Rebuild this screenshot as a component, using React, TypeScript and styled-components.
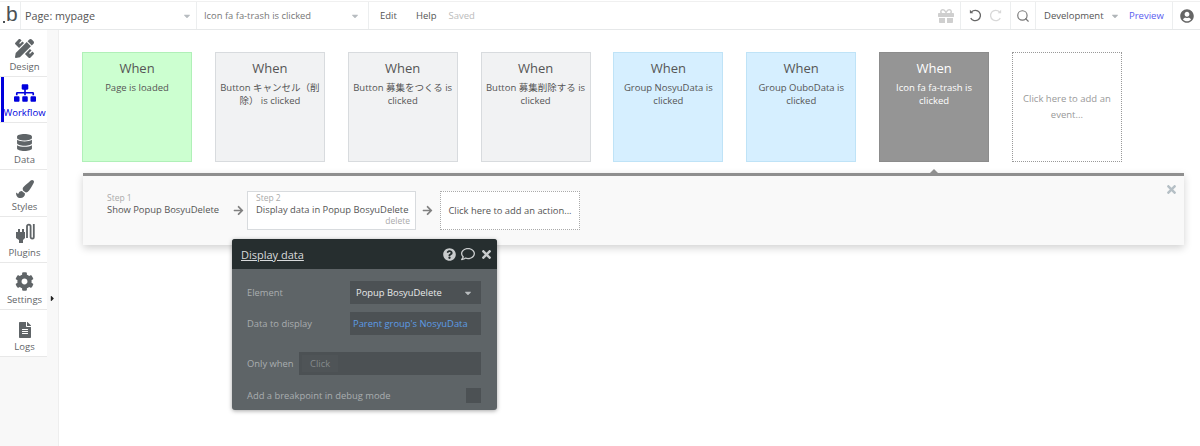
import React from "react"
import styled, { createGlobalStyle } from "styled-components"
import { Search } from "lucide-react"
import {
  FaArrowRight,
  FaCaretDown,
  FaCaretRight,
  FaCog,
  FaDatabase,
  FaFileAlt,
  FaGift,
  FaPaintBrush,
  FaPencilRuler,
  FaQuestionCircle,
  FaRegComment,
  FaSitemap,
  FaTimes,
  FaUserCircle,
} from "react-icons/fa"

const GlobalStyle = createGlobalStyle`
  html, body {
    margin: 0;
    padding: 0;
    background: #fff;
    font-family: "Open Sans", "Noto Sans CJK JP", sans-serif;
  }
`

const events = [
  { kind: "green", text: "Page is loaded" },
  { kind: "plain", text: "Button キャンセル（削除） is clicked" },
  { kind: "plain", text: "Button 募集をつくる is clicked" },
  { kind: "plain", text: "Button 募集削除する is clicked" },
  { kind: "blue", text: "Group NosyuData is clicked" },
  { kind: "blue", text: "Group OuboData is clicked" },
  { kind: "active", text: "Icon fa fa-trash is clicked" },
]

const PlugIcon = () => (
  <svg width="20" height="21" viewBox="0 0 20 21" fill="none">
    <path d="M1 9h2V6h2v3h2V6h2v3h1v6l-2 2v3H4v-3l-3-2z" fill="#5f6467" />
    <path d="M12 15V3.5a1.8 1.8 0 0 1 3.6 0V14a1.6 1.6 0 0 0 3.2 0V1" stroke="#5f6467" strokeWidth="1.8" />
  </svg>
)

const ReloadIcon = ({ color, flip }: { color: string; flip?: boolean }) => (
  <svg width="13" height="13" viewBox="0 0 15 15" fill="none" style={flip ? { transform: "scaleX(-1)" } : undefined}>
    <path d="M3 3.2A6 6 0 1 1 2 10.5" stroke={color} strokeWidth="1.5" />
    <path d="M1 1v4h4z" fill={color} />
  </svg>
)

const navItems = [
  { label: "Design", icon: <FaPencilRuler size={19} /> },
  { label: "Workflow", icon: <FaSitemap size={22} />, active: true },
  { label: "Data", icon: <FaDatabase size={17} /> },
  { label: "Styles", icon: <FaPaintBrush size={18} /> },
  { label: "Plugins", icon: <PlugIcon /> },
  { label: "Settings", icon: <FaCog size={19} /> },
  { label: "Logs", icon: <FaFileAlt size={16} /> },
]

const App = () => {
  return (
    <>
      <GlobalStyle />
      <Page>
        <TopBar>
          <Logo>
            <LogoDot />b
          </Logo>
          <PageSelect>
            Page: mypage
            <SmallCaret />
          </PageSelect>
          <EventSelect>
            Icon fa fa-trash is clicked
            <SmallCaret />
          </EventSelect>
          <MenuLink>Edit</MenuLink>
          <MenuLink>Help</MenuLink>
          <Saved>Saved</Saved>
          <Spacer />
          <IconCell $w={28}>
            <FaGift size={16} color="#cfcfcf" />
          </IconCell>
          <IconCell $w={50} $left>
            <ReloadIcon color="#666" />
            <ReloadIcon color="#d8d8d8" flip />
          </IconCell>
          <IconCell $w={25} $left>
            <Search size={14} color="#777" strokeWidth={2} />
          </IconCell>
          <DevSelect>
            Development
            <FaCaretDown size={10} color="#b0b5b8" />
          </DevSelect>
          <Preview>Preview</Preview>
          <IconCell $w={28} $left>
            <FaUserCircle size={14} color="#666" />
          </IconCell>
        </TopBar>
        <Main>
          <Sidebar>
            {navItems.map((item) => (
              <NavItem key={item.label} $active={item.active}>
                {item.icon}
                <NavLabel>{item.label}</NavLabel>
              </NavItem>
            ))}
            <ExpandCaret>
              <FaCaretRight size={9} />
            </ExpandCaret>
          </Sidebar>
          <Canvas>
            <EventRow>
              {events.map((ev) => (
                <EventCard key={ev.text} $kind={ev.kind}>
                  <When>When</When>
                  <EventText>{ev.text}</EventText>
                </EventCard>
              ))}
              <AddEvent>Click here to add an event...</AddEvent>
            </EventRow>
            <StepPanel>
              <Notch />
              <Step>
                <StepNo>Step 1</StepNo>
                <StepName>Show Popup BosyuDelete</StepName>
              </Step>
              <StepArrow />
              <ActiveStep>
                <StepNo>Step 2</StepNo>
                <StepName>Display data in Popup BosyuDelete</StepName>
                <DeleteText>delete</DeleteText>
              </ActiveStep>
              <StepArrow />
              <AddAction>Click here to add an action...</AddAction>
              <PanelClose>
                <FaTimes size={13} />
              </PanelClose>
            </StepPanel>
            <Popup>
              <PopupHead>
                <PopupTitle>Display data</PopupTitle>
                <PopupIcons>
                  <FaQuestionCircle size={13} color="#c9cccd" />
                  <FaRegComment size={14} color="#c9cccd" />
                  <FaTimes size={13} color="#c9cccd" />
                </PopupIcons>
              </PopupHead>
              <PopupBody>
                <FieldRow>
                  <FieldLabel>Element</FieldLabel>
                  <SelectBox>
                    Popup BosyuDelete
                    <FaCaretDown size={10} color="#b9bdbf" />
                  </SelectBox>
                </FieldRow>
                <FieldRow>
                  <FieldLabel>Data to display</FieldLabel>
                  <ExpressionBox>Parent group's NosyuData</ExpressionBox>
                </FieldRow>
                <WhenRow>
                  <WhenLabel>Only when</WhenLabel>
                  <WhenBox>
                    <ClickChip>Click</ClickChip>
                  </WhenBox>
                </WhenRow>
                <DebugRow>
                  <FieldLabel>Add a breakpoint in debug mode</FieldLabel>
                  <Checkbox />
                </DebugRow>
              </PopupBody>
            </Popup>
          </Canvas>
        </Main>
      </Page>
    </>
  )
}

export default App

const Page = styled.div`
  width: 1200px;
  height: 446px;
  overflow: hidden;
  display: flex;
  flex-direction: column;
  background: #fff;
  color: #444;
`

const TopBar = styled.div`
  height: 27px;
  margin-top: 1px;
  display: flex;
  align-items: center;
  border-top: 1px solid #f0f0f0;
  border-bottom: 1px solid #e6e8e9;
  font-size: 9.5px;
  flex-shrink: 0;
  box-sizing: content-box;
`

const Logo = styled.div`
  position: relative;
  width: 21px;
  height: 100%;
  box-sizing: border-box;
  padding-left: 6px;
  font-size: 21px;
  line-height: 24px;
  color: #4a5054;
  border-right: 1px solid #eceeef;
  font-family: "Liberation Sans", sans-serif;
`

const LogoDot = styled.span`
  position: absolute;
  left: 3px;
  top: 19px;
  width: 2px;
  height: 2px;
  background: #4a5054;
`

const PageSelect = styled.div`
  width: 176px;
  height: 100%;
  box-sizing: border-box;
  padding: 0 4px 0 4px;
  display: flex;
  align-items: center;
  justify-content: space-between;
  border-right: 1px solid #eceeef;
  font-size: 10.8px;
  color: #555;
`

const EventSelect = styled(PageSelect)`
  width: 172px;
  padding: 0 8px 0 7px;
  font-size: 9.4px;
  color: #777;
`

const SmallCaret = styled(FaCaretDown).attrs({ size: 10, color: "#b7bcc0" })``

const MenuLink = styled.div`
  margin-left: 11px;
  margin-right: 8px;
  color: #555;
`

const Saved = styled.div`
  margin-left: 4px;
  color: #bbb;
`

const Spacer = styled.div`
  flex: 1;
`

const IconCell = styled.div<{ $w: number; $left?: boolean }>`
  width: ${(p) => p.$w}px;
  height: 100%;
  box-sizing: border-box;
  display: flex;
  align-items: center;
  justify-content: space-evenly;
  border-left: ${(p) => (p.$left ? "1px solid #eceeef" : "none")};
`

const DevSelect = styled.div`
  width: 94px;
  height: 100%;
  box-sizing: border-box;
  padding: 0 8px;
  display: flex;
  align-items: center;
  gap: 6px;
  border-left: 1px solid #eceeef;
  color: #555;
`

const Preview = styled.div`
  width: 43px;
  color: #5a5cf0;
`

const Main = styled.div`
  flex: 1;
  display: flex;
  min-height: 0;
`

const Sidebar = styled.div`
  position: relative;
  width: 59px;
  flex-shrink: 0;
  box-sizing: border-box;
  padding-right: 11px;
  background: #f8f8f8;
  border-right: 1px solid #eeeeee;
`

const NavItem = styled.div<{ $active?: boolean }>`
  position: relative;
  height: 46.7px;
  box-sizing: border-box;
  background: #fff;
  display: flex;
  flex-direction: column;
  align-items: center;
  justify-content: flex-end;
  gap: 2px;
  padding: 0 0 3px 2px;
  border-bottom: 1px solid #e8e8e8;
  color: ${(p) => (p.$active ? "#0000dd" : "#5f6467")};

  ${(p) =>
    p.$active &&
    `
    &::before {
      content: "";
      position: absolute;
      left: 1px;
      top: 0;
      bottom: 0;
      width: 3px;
      background: #0000dd;
    }
  `}
`

const NavLabel = styled.div`
  font-size: 9.5px;
  line-height: 13px;
  white-space: nowrap;
`

const ExpandCaret = styled.div`
  position: absolute;
  left: 48px;
  top: 264px;
  color: #222;
  line-height: 0;
`

const Canvas = styled.div`
  position: relative;
  flex: 1;
  padding: 22px 16px 0 23px;
  background: #fff;
`

const EventRow = styled.div`
  display: flex;
  gap: 22.85px;
`

const cardColors: Record<string, string> = {
  green: "background:#ccffd0;border-color:#b0f0b8;color:#555;",
  plain: "background:#f1f2f3;border-color:#d8dbde;color:#555;",
  blue: "background:#d6efff;border-color:#bfe3f7;color:#555;",
  active: "background:#959595;border-color:#8c8c8c;color:#fff;",
}

const EventCard = styled.div<{ $kind: string }>`
  width: 110px;
  height: 110px;
  box-sizing: border-box;
  border: 1px solid;
  padding: 6px 3px 0;
  text-align: center;
  ${(p) => cardColors[p.$kind]}
`

const When = styled.div`
  font-size: 13px;
  line-height: 18px;
`

const EventText = styled.div`
  font-size: 9.5px;
  line-height: 12.5px;
  margin-top: 5px;
`

const AddEvent = styled.div`
  width: 110px;
  height: 110px;
  box-sizing: border-box;
  border: 1px dotted #999;
  padding: 0 10px;
  display: flex;
  align-items: center;
  text-align: center;
  font-size: 9.5px;
  line-height: 16px;
  color: #999;
`

const StepPanel = styled.div`
  position: relative;
  margin-top: 11px;
  margin-left: 1px;
  width: 1101px;
  height: 72px;
  box-sizing: border-box;
  border-top: 3px solid #8f8f8f;
  background: #f9f9f9;
  box-shadow: 0 3px 8px rgba(0, 0, 0, 0.18);
  display: flex;
  align-items: flex-start;
  padding: 15px 0 0 24px;
`

const Notch = styled.div`
  position: absolute;
  left: 846px;
  top: -7px;
  border-left: 5px solid transparent;
  border-right: 5px solid transparent;
  border-bottom: 5px solid #8f8f8f;
`

const Step = styled.div`
  width: 126px;
  padding-top: 2px;
`

const StepNo = styled.div`
  font-size: 8.5px;
  line-height: 10px;
  color: #aaa;
`

const StepName = styled.div`
  font-size: 9.4px;
  line-height: 14px;
  color: #555;
  white-space: nowrap;
`

const StepArrow = styled(FaArrowRight).attrs({ size: 11, color: "#808080" })`
  margin: 14px 3px 0 0;
  flex-shrink: 0;
`

const ActiveStep = styled.div`
  width: 169px;
  height: 39px;
  box-sizing: border-box;
  background: #fff;
  border: 1px solid #d8dbde;
  margin-right: 6px;
  padding: 1px 8px 0;
`

const DeleteText = styled.div`
  font-size: 8.5px;
  line-height: 10px;
  text-align: right;
  color: #aaa;
  margin: -1px -3px 0 0;
`

const AddAction = styled.div`
  width: 140px;
  height: 39px;
  box-sizing: border-box;
  margin-left: 4px;
  background: #fff;
  border: 1px dotted #aaa;
  display: flex;
  align-items: center;
  justify-content: center;
  font-size: 9.4px;
  color: #555;
  white-space: nowrap;
`

const PanelClose = styled.div`
  position: absolute;
  right: 6px;
  top: 7px;
  color: #b5bfc5;
  line-height: 0;
`

const Popup = styled.div`
  position: absolute;
  left: 173px;
  top: 209px;
  width: 265px;
  height: 171px;
  border-radius: 3px;
  overflow: hidden;
  background: #5e6467;
  box-shadow: 0 1px 4px rgba(0, 0, 0, 0.35);
`

const PopupHead = styled.div`
  height: 30px;
  background: #262e2f;
  display: flex;
  align-items: center;
  justify-content: space-between;
  padding: 0 4px 0 9px;
`

const PopupTitle = styled.div`
  font-size: 11px;
  color: #d8dadb;
  text-decoration: underline;
`

const PopupIcons = styled.div`
  display: flex;
  align-items: center;
  gap: 5px;
`

const PopupBody = styled.div`
  padding: 12px 16px 0 15px;
  font-size: 9.4px;
`

const FieldRow = styled.div`
  display: grid;
  grid-template-columns: 103px 131px;
  align-items: center;
  height: 23px;
  margin-bottom: 8px;
`

const FieldLabel = styled.div`
  color: #a9adaf;
`

const SelectBox = styled.div`
  height: 23px;
  box-sizing: border-box;
  padding: 0 8px 0 6px;
  background: #4c5154;
  color: #e8e9ea;
  display: flex;
  align-items: center;
  justify-content: space-between;
`

const ExpressionBox = styled.div`
  height: 23px;
  box-sizing: border-box;
  padding-left: 3px;
  background: #4c5154;
  color: #5c9ce6;
  display: flex;
  align-items: center;
  white-space: nowrap;
`

const WhenRow = styled.div`
  display: flex;
  align-items: center;
  height: 23px;
  margin-top: 17px;
`

const WhenLabel = styled(FieldLabel)`
  width: 52px;
`

const WhenBox = styled.div`
  width: 182px;
  height: 23px;
  box-sizing: border-box;
  padding-left: 3px;
  background: #4c5154;
  display: flex;
  align-items: center;
`

const ClickChip = styled.div`
  padding: 2px 8px;
  color: #858a8c;
  background: #4f5457;
`

const DebugRow = styled.div`
  display: flex;
  align-items: center;
  justify-content: space-between;
  margin-top: 13px;
  width: 234px;
`

const Checkbox = styled.div`
  width: 15px;
  height: 15px;
  background: #4c5154;
`
